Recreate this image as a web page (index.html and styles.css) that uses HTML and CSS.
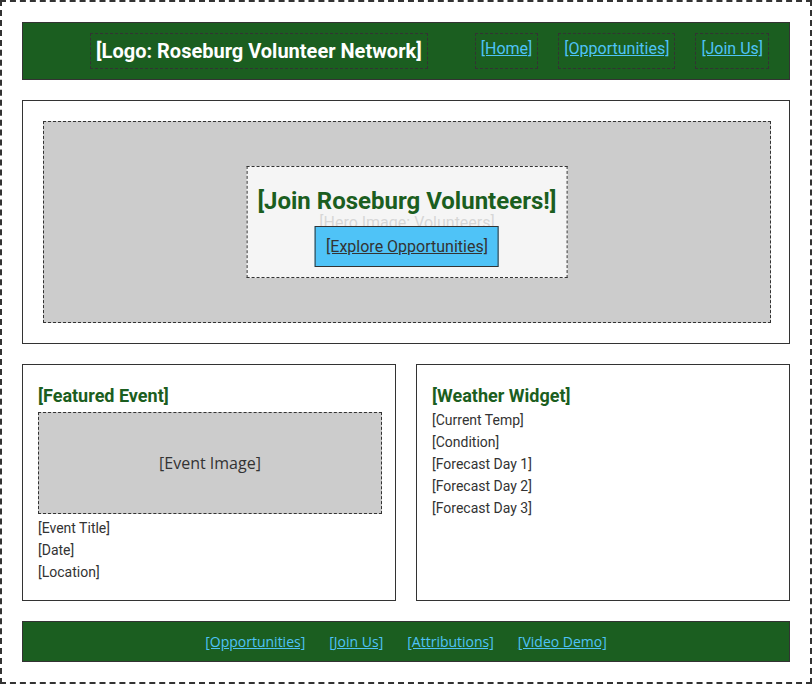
FILE: index.html
```html
<!DOCTYPE html>
<html lang="en">
<head>
<meta charset="utf-8">
<title>Roseburg Volunteer Network</title>
<link rel="stylesheet" href="styles.css">
</head>
<body>
<header class="site-header">
  <div class="logo-wrap"><span class="logo">[Logo: Roseburg Volunteer Network]</span></div>
  <nav class="main-nav">
    <a href="#">[Home]</a>
    <a href="#">[Opportunities]</a>
    <a href="#">[Join Us]</a>
  </nav>
</header>

<section class="hero">
  <div class="hero-image">
    <span class="hero-placeholder">[Hero Image: Volunteers]</span>
    <div class="hero-overlay">
      <h1 class="hero-title">[Join Roseburg Volunteers!]</h1>
      <a href="#" class="hero-btn">[Explore Opportunities]</a>
    </div>
  </div>
</section>

<div class="cards">
  <section class="card">
    <h3 class="card-title">[Featured Event]</h3>
    <div class="event-image">[Event Image]</div>
    <p class="line">[Event Title]</p>
    <p class="line">[Date]</p>
    <p class="line">[Location]</p>
  </section>
  <section class="card">
    <h3 class="card-title">[Weather Widget]</h3>
    <p class="line">[Current Temp]</p>
    <p class="line">[Condition]</p>
    <p class="line">[Forecast Day 1]</p>
    <p class="line">[Forecast Day 2]</p>
    <p class="line">[Forecast Day 3]</p>
  </section>
</div>

<footer class="site-footer">
  <a href="#">[Opportunities]</a>
  <a href="#">[Join Us]</a>
  <a href="#">[Attributions]</a>
  <a href="#">[Video Demo]</a>
</footer>
</body>
</html>
```

FILE: styles.css
```css
* { box-sizing: border-box; }

html { background: #fff; }

body {
  margin: 0;
  padding: 20px;
  border: 2px dashed #333;
  font-family: Roboto, "Liberation Sans", sans-serif;
  color: #333;
  display: flex;
  flex-direction: column;
  gap: 20px;
}

.site-header {
  display: flex;
  align-items: center;
  background: #1b5e20;
  border: 1px solid #333;
  padding: 10px 20px;
}

.logo-wrap {
  flex: 1;
  text-align: center;
}

.logo {
  display: inline-block;
  color: #fff;
  font-weight: 700;
  font-size: 20px;
  line-height: 24px;
  padding: 5px;
  border: 1px dashed #333;
}

.main-nav {
  display: flex;
  gap: 20px;
}

.main-nav a {
  color: #4fc3f7;
  font-size: 16px;
  line-height: 20px;
  padding: 5px 5px 9px;
  border: 1px dashed #333;
  text-decoration: underline;
}

.hero {
  border: 1px solid #333;
  padding: 20px;
}

.hero-image {
  box-sizing: content-box;
  position: relative;
  width: 100%;
  height: 200px;
  background: #ccc;
  border: 1px dashed #333;
  display: flex;
  align-items: center;
  justify-content: center;
}

.hero-placeholder {
  font-size: 16px;
  color: #333;
}

.hero-overlay {
  position: absolute;
  left: 50%;
  top: 50%;
  transform: translate(-50%, -50%);
  background: rgba(255, 255, 255, 0.8);
  border: 1px dashed #333;
  padding: 10px;
  text-align: center;
  white-space: nowrap;
}

.hero-title {
  margin: 10px 0 11px;
  font-size: 24px;
  line-height: 28px;
  font-weight: 700;
  color: #1b5e20;
}

.hero-btn {
  display: inline-block;
  background: #4fc3f7;
  border: 1px solid #333;
  color: #333;
  font-size: 16px;
  line-height: 19px;
  padding: 10px;
  text-decoration: underline;
}

.cards {
  display: grid;
  grid-template-columns: 1fr 1fr;
  gap: 20px;
}

.card {
  border: 1px solid #333;
  padding: 15px 15px 17px;
}

.card-title {
  margin: 5px 0 2px;
  font-size: 18px;
  line-height: 22px;
  font-weight: 700;
  color: #1b5e20;
}

.event-image {
  box-sizing: content-box;
  width: 100%;
  height: 100px;
  margin: 5px 0 3px;
  background: #ccc;
  border: 1px dashed #333;
  display: flex;
  align-items: center;
  justify-content: center;
  font-family: "Open Sans", sans-serif;
  font-size: 16px;
  color: #333;
}

.line {
  margin: 0;
  font-size: 14px;
  line-height: 22px;
  color: #333;
}

.site-footer {
  background: #1b5e20;
  border: 1px solid #333;
  padding: 10px;
  display: flex;
  justify-content: center;
  gap: 24px;
  font-family: "Open Sans", sans-serif;
  font-size: 14px;
  line-height: 19px;
}

.site-footer a {
  color: #4fc3f7;
  text-decoration: underline;
}
```
